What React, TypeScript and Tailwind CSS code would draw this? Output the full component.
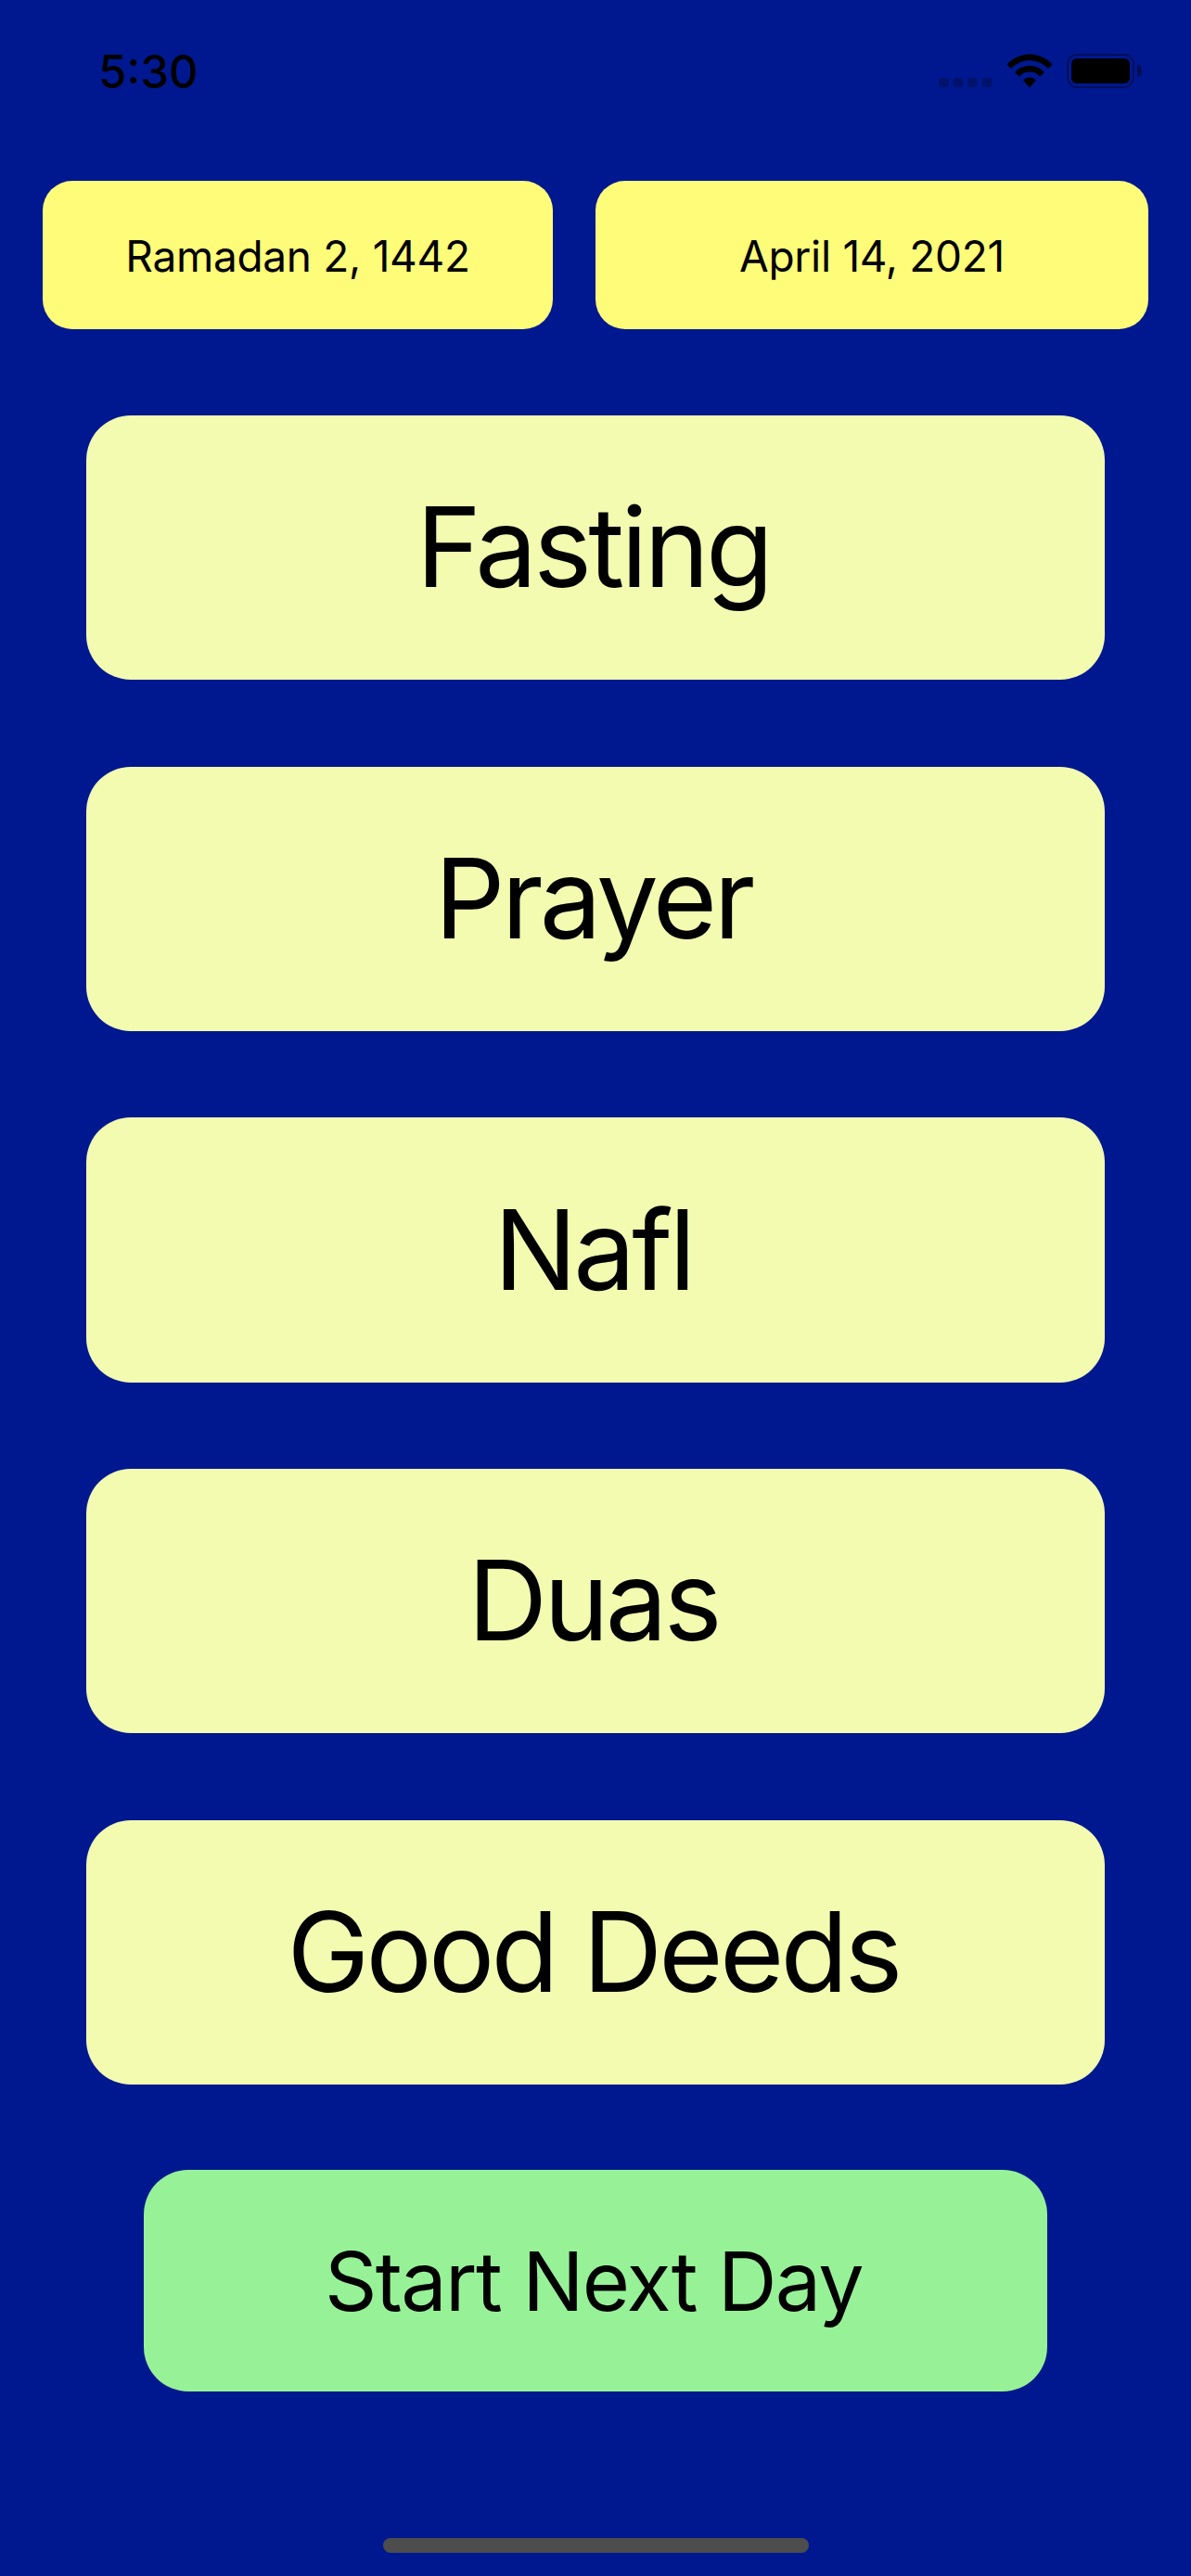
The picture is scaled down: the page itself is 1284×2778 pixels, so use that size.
import React from 'react';

const font = { fontFamily: 'Inter, "Liberation Sans", sans-serif' };

const SignalDots = () => (
  <svg width="58" height="12" viewBox="0 0 58 12" className="self-end">
    {[0, 15.5, 31, 46.5].map((x) => (
      <rect key={x} x={x} y="1" width="11" height="10" rx="3" fill="#000" opacity="0.25" />
    ))}
  </svg>
);

const Wifi = () => (
  <svg width="50" height="37" viewBox="0 0 50 37">
    <path d="M0.5 11.5C7 4.5 15.5 0.5 25 0.5S43 4.5 49.5 11.5L45 16C39.5 10.5 32.5 7 25 7S10.5 10.5 5 16Z" fill="#000" />
    <path d="M9 20C13 15.5 18.8 13 25 13S37 15.5 41 20L36.3 24.6C33.4 21.5 29.4 19.6 25 19.6S16.6 21.5 13.7 24.6Z" fill="#000" />
    <path d="M18 28.5C19.8 26.5 22.3 25.4 25 25.4S30.2 26.5 32 28.5L25 36.5Z" fill="#000" />
  </svg>
);

const Battery = () => (
  <div className="flex items-center gap-[3px]">
    <div className="flex h-[37px] w-[73px] items-center justify-center rounded-[11px] border-[2px] border-black/35 p-[3px]">
      <div className="h-full w-full rounded-[6px] bg-black" />
    </div>
    <div className="h-[13px] w-[5px] rounded-r-full bg-black/40" />
  </div>
);

const StatusBar = () => (
  <div className="flex items-start justify-between pl-[106px] pr-[53px] pt-[58px]">
    <span className="text-[49px] leading-[40px] font-medium text-black">5:30</span>
    <div className="flex items-stretch gap-[15px]">
      <SignalDots />
      <Wifi />
      <Battery />
    </div>
  </div>
);

const DateChip = ({ label, className }: { label: string; className: string }) => (
  <div className={`flex h-[160px] items-center justify-center rounded-[32px] bg-[#fffc79] pt-[2px] text-[46px] tracking-[-0.3px] text-black ${className}`}>
    {label}
  </div>
);

const sections = ['Fasting', 'Prayer', 'Nafl', 'Duas', 'Good Deeds'];

export default function App() {
  return (
    <div className="flex h-[2778px] w-[1284px] flex-col bg-[#00188f] text-black" style={font}>
      <StatusBar />

      <div className="mt-[97px] flex gap-[46px] px-[46px]">
        <DateChip label="Ramadan 2, 1442" className="w-[550px]" />
        <DateChip label="April 14, 2021" className="w-[596px]" />
      </div>

      <div className="mt-[93px] flex flex-col gap-[93.33px] px-[93px]">
        {sections.map((s) => (
          <button
            key={s}
            className="flex h-[285.33px] items-center justify-center rounded-[48px] bg-[#f2fbb0] pr-[5px] text-[119px] tracking-[-3.8px] text-black"
          >
            {s}
          </button>
        ))}
      </div>

      <button className="mx-auto mt-[92.5px] flex h-[239px] w-[974px] items-center justify-center rounded-[48px] bg-[#97f297] pr-[4px] text-[88px] tracking-[-1.65px] text-black">
        Start Next Day
      </button>

      <div className="mx-auto mt-[157.5px] h-[16px] w-[459px] rounded-full bg-[#4d4d4d]" />
    </div>
  );
}
